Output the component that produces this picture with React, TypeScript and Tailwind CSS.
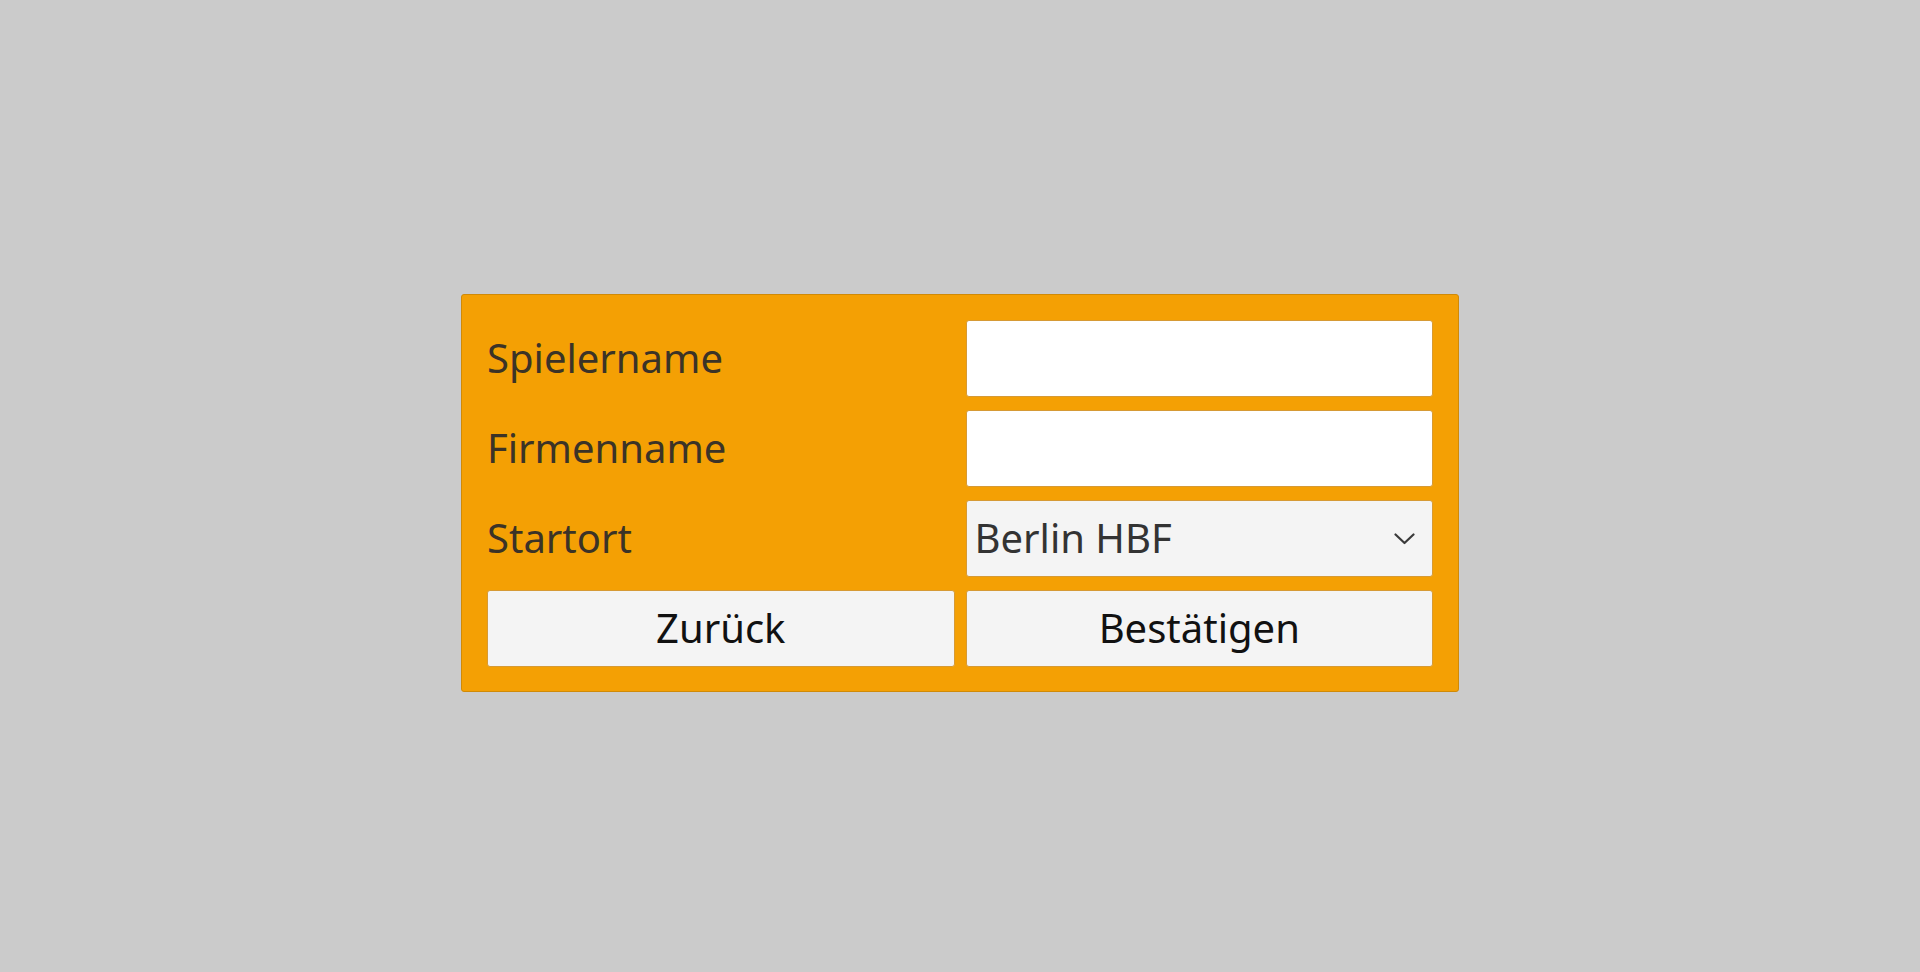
import React from "react";

const font = { fontFamily: '"Noto Sans", "Open Sans", sans-serif' };

function Label({ children }: { children: React.ReactNode }) {
  return (
    <div className="h-[77px] flex items-center pb-[2px] text-[40px] leading-none text-[#3b3327]">
      {children}
    </div>
  );
}

function TextField() {
  return (
    <input
      type="text"
      className="h-[77px] w-full bg-white border border-[#d69a35] rounded-[3px] px-[10px] text-[40px] text-[#333] outline-none"
      style={font}
    />
  );
}

function Chevron() {
  return (
    <svg width="21" height="12" viewBox="0 0 21 12" fill="none" className="block">
      <path d="M1.5 1.5 L10.5 10 L19.5 1.5" stroke="#3a3a3a" strokeWidth="2.2" strokeLinecap="round" strokeLinejoin="round" />
    </svg>
  );
}

export default function App() {
  return (
    <div className="min-h-screen w-full bg-[#cbcbcb] flex justify-center pt-[294px]" style={font}>
      <div className="w-[998px] h-[398px] bg-[#f4a004] border border-[#d08a07] rounded-[3px] p-[25px] grid grid-cols-2 gap-x-[11px] gap-y-[13px] content-start">
        <Label>Spielername</Label>
        <TextField />

        <Label>Firmenname</Label>
        <TextField />

        <Label>Startort</Label>
        <div className="relative h-[77px]">
          <select
            defaultValue="berlin"
            className="appearance-none h-[77px] w-full bg-[#f4f4f4] border border-[#d69a35] rounded-[3px] pl-[8px] pb-[2px] pr-[50px] text-[40px] text-[#333] outline-none"
            style={font}
          >
            <option value="berlin">Berlin HBF</option>
          </select>
          <div className="pointer-events-none absolute right-[18px] top-[33px]">
            <Chevron />
          </div>
        </div>

        <button className="h-[77px] w-full bg-[#f4f4f4] border border-[#d69a35] rounded-[3px] pb-[2px] text-[40px] text-[#111] leading-none">
          Zurück
        </button>
        <button className="h-[77px] w-full bg-[#f4f4f4] border border-[#d69a35] rounded-[3px] pb-[2px] text-[40px] text-[#111] leading-none">
          Bestätigen
        </button>
      </div>
    </div>
  );
}
